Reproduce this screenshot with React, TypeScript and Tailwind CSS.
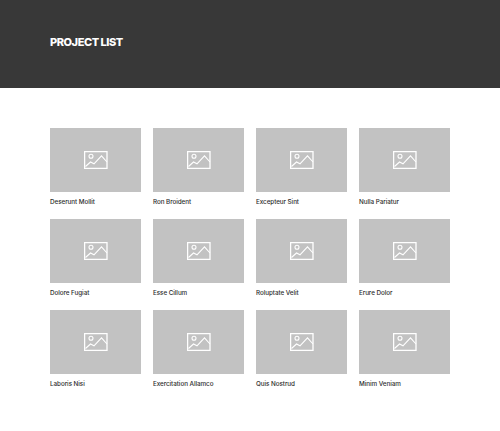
const projects = [
  "Deserunt Mollit",
  "Ron Broident",
  "Excepteur Sint",
  "Nulla Pariatur",
  "Dolore Fugiat",
  "Esse Cillum",
  "Roluptate Velit",
  "Erure Dolor",
  "Laboris Nisi",
  "Exercitation Allamco",
  "Quis Nostrud",
  "Minim Veniam",
];

function ImageIcon() {
  return (
    <svg width="24" height="18" viewBox="0 0 24 18" fill="none" stroke="white" strokeWidth="1.1">
      <rect x="0.6" y="0.6" width="22.4" height="16.8" strokeWidth="1.3" />
      <circle cx="7" cy="5.2" r="2" />
      <path d="M1.5 15.5 L6.5 11 L10 12.8 L17.5 4.8 L23 11" />
    </svg>
  );
}

export default function App() {
  return (
    <div className="w-[500px] h-[431px] bg-white font-['Inter',sans-serif]">
      <header className="h-[88px] bg-[#383838] pl-[50px] pb-[4px] flex items-center">
        <h1 className="text-[11px] font-extrabold tracking-[-0.45px] text-white">PROJECT LIST</h1>
      </header>
      <main className="px-[50px] pt-[40px] grid grid-cols-4 gap-x-[12px] gap-y-[27px]">
        {projects.map((name) => (
          <div key={name} className="h-[64px]">
            <div className="h-[64px] bg-[#c2c2c2] flex items-center justify-center">
              <ImageIcon />
            </div>
            <p className="mt-[5px] text-[6.3px] leading-[10px] font-medium tracking-[-0.05px] text-[#2e2e2e] whitespace-nowrap">{name}</p>
          </div>
        ))}
      </main>
    </div>
  );
}
